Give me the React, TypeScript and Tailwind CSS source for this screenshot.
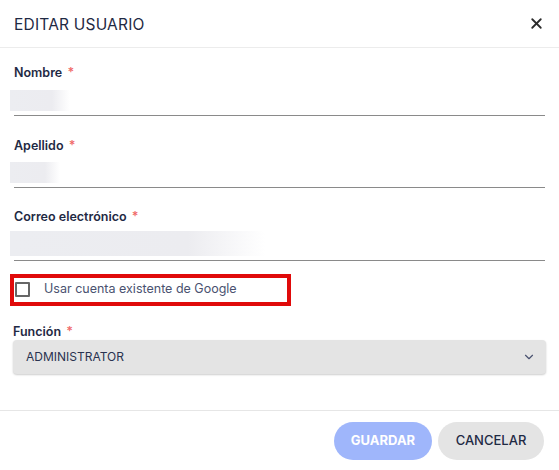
import { X, ChevronDown } from 'lucide-react'

const font = { fontFamily: 'Inter, "Noto Sans", sans-serif' }

function Label({ text }: { text: string }) {
  return (
    <div className="text-[12.5px] font-semibold text-[#1f2a44] leading-none">
      {text} <span className="text-[#f06a6a] ml-0.5">*</span>
    </div>
  )
}

function BlurField({ label, blurW, top, h }: { label: string; blurW: number; top: string; h: string }) {
  return (
    <div className="px-[14px]">
      <Label text={label} />
      <div className={`relative border-b border-[#8a8a8a] ${top} ${h}`}>
        <div
          className="absolute -left-1 top-0 bottom-1"
          style={{ width: blurW, background: 'linear-gradient(90deg, #ecedf1 0%, #ececf0 70%, #ffffff 100%)' }}
        />
      </div>
    </div>
  )
}

export default function App() {
  return (
    <div className="w-[559px] h-[470px] bg-white relative overflow-hidden" style={font}>
      <div className="h-[48px] flex items-center justify-between pl-[14px] pr-[14px] border-b border-[#ececec]">
        <h1 className="text-[15.5px] text-[#1f2a44] tracking-[0.2px] pt-0.5">EDITAR USUARIO</h1>
        <X className="w-[17px] h-[17px] text-[#2b2b2b]" strokeWidth={2.6} />
      </div>

      <div className="pt-[19px]">
        <BlurField label="Nombre" blurW={60} top="mt-[10px]" h="h-[26px]" />
        <div className="h-[24px]" />
        <BlurField label="Apellido" blurW={50} top="mt-[10px]" h="h-[26px]" />
        <div className="h-[23px]" />
        <BlurField label="Correo electrónico" blurW={255} top="mt-[7px]" h="h-[30px]" />

        <div className="mt-[13px] ml-[10px] w-[281px] h-[32px] border-[4px] border-[#e00a0a] flex items-center">
          <div className="w-[15px] h-[15px] border-2 border-[#666] ml-[1px] rounded-[1px]" />
          <span className="ml-[14px] text-[12.5px] text-[#4a5270]">Usar cuenta existente de Google</span>
        </div>

        <div className="px-[13px] mt-[20px]">
          <Label text="Función" />
          <div className="mt-[2px] h-[34px] bg-[#e4e4e4] rounded shadow-[0_1px_2px_rgba(0,0,0,0.2)] flex items-center justify-between pl-[13px] pr-[10px]">
            <span className="text-[12px] text-[#2a3350]">ADMINISTRATOR</span>
            <ChevronDown className="w-[14px] h-[14px] text-[#4a5270]" strokeWidth={2} />
          </div>
        </div>
      </div>

      <div className="absolute left-0 right-0 top-[410px] border-t border-[#e6e6e6] flex justify-end gap-[6px] pr-[15px] pt-[11px]">
        <button className="w-[98px] h-[38px] rounded-full bg-[#9fb6fb] text-white text-[13px] font-bold">GUARDAR</button>
        <button className="w-[106px] h-[38px] rounded-full bg-[#e4e4e4] text-[#1f2a44] text-[13px] font-medium">CANCELAR</button>
      </div>
    </div>
  )
}
